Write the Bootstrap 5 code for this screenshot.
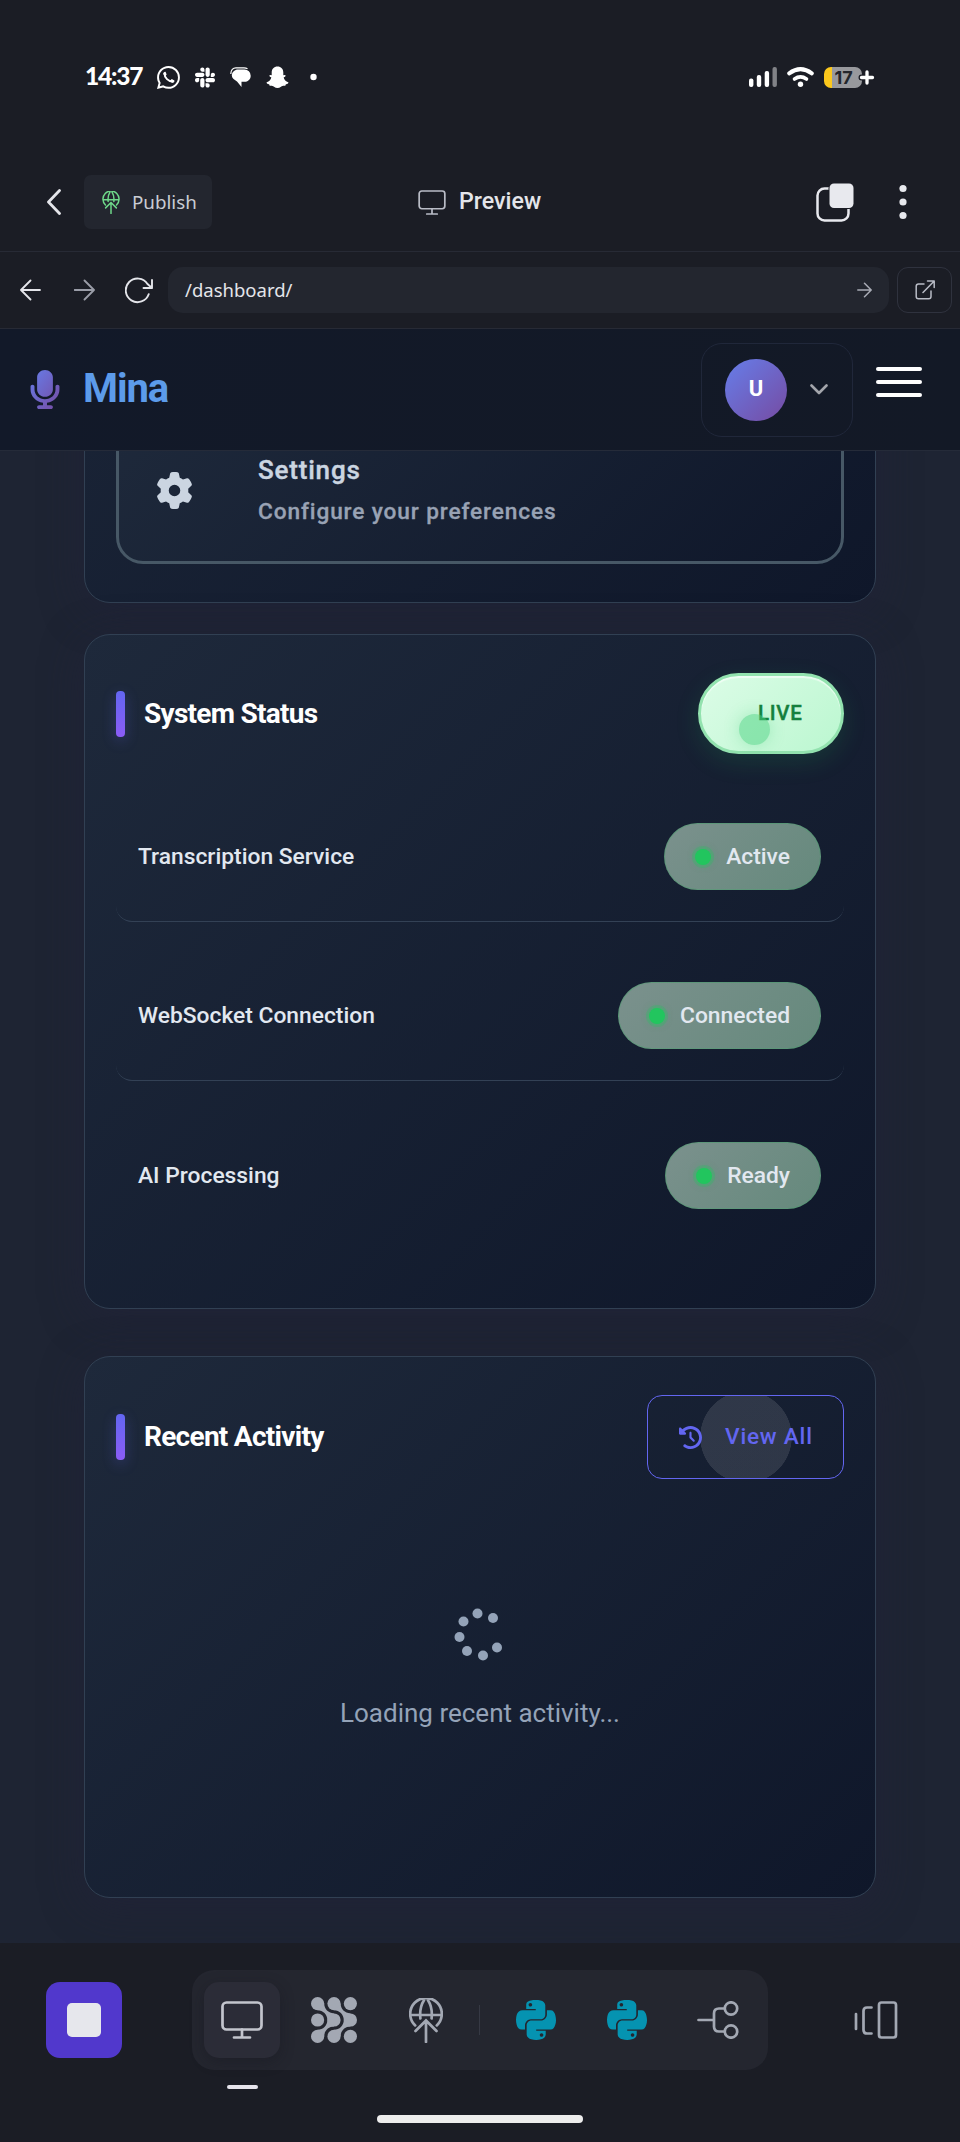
<!DOCTYPE html>
<html lang="en" data-bs-theme="dark">
<head>
<meta charset="utf-8">
<meta name="viewport" content="width=device-width, initial-scale=1">
<title>Mina dashboard</title>
<link href="https://cdn.jsdelivr.net/npm/bootstrap@5.3.0/dist/css/bootstrap.min.css" rel="stylesheet">
<style>
body{background:#1b1d25;font-family:Roboto,"Liberation Sans",sans-serif;color:#e2e8f0;line-height:1.2;overflow:hidden}
svg{display:block;flex:none}
.plex{font-family:"Noto Sans","Open Sans",sans-serif}
/* device status bar */
.status-bar{height:154px;padding:0 86px 0 85px}
.clock{font:900 24.5px/1 Lato,sans-serif;color:#fff;width:72px;letter-spacing:-1.2px;padding-bottom:2px}
.tray-icons{gap:15px}
.battery{width:38px;height:21px;border-radius:7px;background:linear-gradient(90deg,#fcc81c 8px,#98999d 8px);position:relative;margin-left:10px;margin-right:12px;color:#23252b;font:bold 18px/21px Inter,sans-serif;text-align:center;padding-left:1px}
.battery svg{position:absolute;left:34px;top:2px}
/* workspace header */
.app-head{height:98px;border-bottom:1px solid #272a35;padding-bottom:1px}
.publish{width:128px;height:54px;border-radius:7px;background:#23262f;color:#c9ccd4;font-size:18.8px;padding-left:18px;margin-left:23px}
.preview-title{font:500 23.2px/1 Roboto,sans-serif;color:#e4e5ea}
.url-row{height:77px;border-bottom:1px solid #272a35}
.url-field{width:721px;height:46px;border-radius:15px;background:#23262f;color:#e4e5ea;font-size:18.5px;padding:0 17px 0 17px;margin-left:15px}
.open-ext{width:55px;height:46px;border:1px solid #2f323e;border-radius:11px;margin-left:8px}
/* Mina navbar */
.mina-nav{height:122px;background:linear-gradient(90deg,#121929,#131926);border-bottom:1px solid #252b39;padding:0 38px 0 28px}
.brand{font-size:40px;font-weight:700;color:#5c9bea;letter-spacing:-1.1px;line-height:1;margin-left:21px;padding-bottom:2px}
.user-box{width:152px;height:94px;border:1px solid #20273a;border-radius:21px;padding-left:23px}
.avatar{width:62px;height:62px;border-radius:50%;background:linear-gradient(135deg,#667eea,#764ba2);color:#fff;font-size:22px;font-weight:700}
.burger{width:46px;gap:9px;margin-left:23px;margin-bottom:15px}
.burger i{height:4px;border-radius:2px;background:#fff}
/* dashboard */
.dash{height:1492px;background:#1e2433;padding:0 84px;overflow:hidden}
.panel{flex:none;border:1px solid #314053;border-radius:26px;background:linear-gradient(135deg,#1e293b 0%,#0f172a 100%);box-shadow:0 8px 40px rgba(34,34,58,.55);padding:38px 31px}
.panel-actions{height:652px;margin-top:-500px;margin-bottom:31px}
.panel-status{height:675px;margin-bottom:47px}
.panel-activity{height:542px}
.setting{height:150px;border:3px solid #475866;border-radius:27px;background:linear-gradient(135deg,#1e293b,#0f172a);padding-left:38px;padding-top:2px}
.setting-text{margin-left:66px}
.setting-name{font-size:26px;font-weight:500;color:#cbd5e1;letter-spacing:.8px;-webkit-text-stroke:.4px #cbd5e1}
.setting-note{font-size:22.7px;font-weight:500;color:#98a2b4;letter-spacing:.86px;margin-top:12px;-webkit-text-stroke:.3px #98a2b4}
.accent{width:9px;height:46px;border-radius:4px;background:linear-gradient(#6366f1,#8b5cf6);box-shadow:0 4px 14px rgba(99,102,241,.3);margin-right:19px}
.panel-title{font-size:28px;font-weight:700;color:#fff;letter-spacing:-.72px}
.live{width:146px;height:81px;border:3px solid #92e2ae;border-radius:41px;background:linear-gradient(135deg,#dcfce7,#bbf7d0);box-shadow:0 8px 24px rgba(34,197,94,.15),inset 0 2px 1px rgba(255,255,255,.6);color:#15803d;font-size:20.5px;font-weight:500;letter-spacing:.7px;-webkit-text-stroke:.4px #15803d;padding-left:57px;position:relative}
.live::before{content:"";position:absolute;left:38px;top:38px;width:31px;height:31px;border-radius:50%;background:rgba(74,210,128,.5);box-shadow:0 0 16px rgba(34,197,94,.25)}
.service{height:130px;border-bottom:1px solid #334155;border-radius:16px;padding:0 23px 0 22px;margin-bottom:29px;font-size:22.8px;font-weight:500}
.service:nth-child(3){margin-bottom:30px}
.service:last-child{border-bottom-color:transparent}
.state{height:67px;border-radius:34px;border:1px solid rgba(74,160,110,.5);background:linear-gradient(135deg,#7b918d,#65897c);padding:0 30px;color:#e2e8f0}
.state i{width:16px;height:16px;border-radius:50%;background:#22c55e;box-shadow:0 0 0 3px rgba(34,197,94,.25),0 0 7px rgba(34,197,94,.5);margin-right:15px}
.view-all{width:197px;height:84px;border:1px solid #6366f1;border-radius:15px;color:#6366f1;font-size:22.6px;font-weight:500;letter-spacing:.8px;padding-left:31px;background:radial-gradient(circle at 98px 41px,rgba(255,255,255,.11) 0 45.5px,transparent 46px)}
.loading{color:#94a3b8;font-size:26px;margin-top:127px}
/* dock */
.dock{height:199px;background:#1b1d25;position:relative}
.stop{width:76px;height:76px;border-radius:14px;background:#5138cc;margin:39px 0 0 46px}
.stop i{width:34px;height:34px;border-radius:5px;background:#e6e7ec}
.tool-group{width:576px;height:100px;border-radius:22px;background:#24262f;margin:27px 0 0 70px;padding:0 12px}
.tool{width:76px;height:76px;border-radius:15px}
.tool.current{background:#2b2c37;box-shadow:0 4px 14px rgba(20,20,30,.35)}
.tool-divider{width:1px;height:30px;background:#363944;margin-left:15px}
.tool-mark{width:31px;height:4px;border-radius:2px;background:#e6e4ec;position:absolute;left:227px;top:142px}
.home-bar{width:206px;height:8px;border-radius:4px;background:#ededed;position:absolute;left:377px;top:172px}
</style>
</head>
<body>
<svg width="0" height="0" class="position-absolute"><defs>
<symbol id="py" viewBox="0 32 448 448"><path d="M439.8 200.5c-7.7-30.9-22.3-54.2-53.4-54.2h-40.1v47.4c0 36.8-31.2 67.8-66.8 67.8H172.7c-29.2 0-53.4 25-53.4 54.3v101.8c0 29 25.2 46 53.4 54.3 33.8 9.9 66.3 11.7 106.8 0 26.9-7.8 53.4-23.5 53.4-54.3v-40.7H226.2v-13.6h160.2c31.1 0 42.6-21.7 53.4-54.2 11.2-33.5 10.7-65.7 0-108.6zM286.2 404c11.1 0 20.1 9.1 20.1 20.3 0 11.3-9 20.4-20.1 20.4-11 0-20.1-9.2-20.1-20.4.1-11.3 9.1-20.3 20.1-20.3zM167.8 248.1h106.8c29.7 0 53.4-24.5 53.4-54.3V91.9c0-29-24.4-50.7-53.4-55.6-35.8-5.9-74.7-5.6-106.8.1-45.2 8-53.4 24.7-53.4 55.6v40.7h106.9v13.6h-147c-31.1 0-58.3 18.7-66.8 54.2-9.8 40.7-10.2 66.1 0 108.6 7.6 31.6 25.7 54.2 56.8 54.2H101v-48.8c0-35.3 30.5-66.4 66.8-66.4zm-6.7-142.6c-11.1 0-20.1-9.1-20.1-20.3.1-11.3 9-20.4 20.1-20.4 11 0 20.1 9.2 20.1 20.4s-9 20.3-20.1 20.3z"/></symbol>
<symbol id="monitor" viewBox="0 0 42 38"><rect x="1.5" y="1.5" width="39" height="27" rx="4"/><path d="M21 28.5V36M13 36.5h16"/></symbol>
<symbol id="globe" viewBox="0 0 34 45"><path d="M6.2 27.4A15.8 15.8 0 1 1 27.8 27.4M1.5 17h31M11.4 20.5C10.5 12 12.5 6 15 2.2M22.6 20.5C23.5 12 21.5 6 19 2.2M17 23.5V44M6.5 33L17 22.5L27.5 33"/></symbol>
</defs></svg>

<header class="status-bar d-flex align-items-center">
  <div class="clock">14:37</div>
  <div class="tray-icons d-flex align-items-center">
    <svg width="23" height="23" viewBox="0 0 16 16" fill="#fff"><path d="M13.601 2.326A7.854 7.854 0 0 0 7.994 0C3.627 0 .068 3.558.064 7.926c0 1.399.366 2.76 1.057 3.965L0 16l4.204-1.102a7.933 7.933 0 0 0 3.79.965h.004c4.368 0 7.926-3.558 7.93-7.93A7.898 7.898 0 0 0 13.6 2.326zM7.994 14.521a6.573 6.573 0 0 1-3.356-.92l-.24-.144-2.494.654.666-2.433-.156-.251a6.56 6.56 0 0 1-1.007-3.505c0-3.626 2.957-6.584 6.591-6.584a6.56 6.56 0 0 1 4.66 1.931 6.557 6.557 0 0 1 1.928 4.66c-.004 3.639-2.961 6.592-6.592 6.592z"/><path d="M5.2 5.2C5.1 8 8 11 11 10.8" fill="none" stroke="#fff" stroke-width="1.3" stroke-linecap="round"/><path d="M4.4 5.8C4.2 4.4 5.5 3.8 6 4.2L6.7 5.9L5.7 7.3zM10.1 11.5C11.5 12 12.4 10.8 12.1 10L10.3 9.1L9 10.3z"/></svg>
    <svg width="20" height="21" viewBox="0 0 16 16" fill="#fff"><path d="M3.362 10.11c0 .926-.756 1.681-1.681 1.681S0 11.036 0 10.111C0 9.186.756 8.43 1.68 8.43h1.682v1.68zm.846 0c0-.924.756-1.68 1.681-1.68s1.681.756 1.681 1.68v4.21c0 .924-.756 1.68-1.68 1.68a1.685 1.685 0 0 1-1.682-1.68v-4.21zM5.89 3.362c-.926 0-1.682-.756-1.682-1.681S4.964 0 5.89 0s1.68.756 1.68 1.68v1.682H5.89zm0 .846c.924 0 1.68.756 1.68 1.681S6.814 7.57 5.89 7.57H1.68C.757 7.57 0 6.814 0 5.89c0-.926.756-1.682 1.68-1.682h4.21zm6.749 1.682c0-.926.755-1.682 1.68-1.682.925 0 1.681.756 1.681 1.681s-.756 1.681-1.68 1.681h-1.681V5.89zm-.848 0c0 .924-.755 1.68-1.68 1.68A1.685 1.685 0 0 1 8.43 5.89V1.68C8.43.757 9.186 0 10.11 0c.926 0 1.681.756 1.681 1.68v4.21zm-1.681 6.748c.926 0 1.682.756 1.682 1.681S11.036 16 10.11 16s-1.681-.756-1.681-1.68v-1.682h1.68zm0-.847c-.924 0-1.68-.755-1.68-1.68 0-.925.756-1.681 1.68-1.681h4.21c.924 0 1.68.756 1.68 1.68 0 .926-.756 1.681-1.68 1.681h-4.21z"/></svg>
    <svg width="21" height="20" viewBox="0 0 21 20"><path d="M.8 7C.8 3 3 .8 6 .8h8q2 0 3.500 1" fill="none" stroke="#fff" stroke-width="1.200"/><path d="M8 2.500h6.500a6.200 6.200 0 0 1 6.200 6.200c0 4-3.500 6-5.700 6h-3.500V20L7 14.500C4 12.500 1.800 11 1.800 8.500C1.800 5 5 2.500 8 2.500z" fill="#fff"/></svg>
    <svg width="23" height="23" viewBox="0 0 23 23" fill="#fff"><path d="M11.5.5C15 .5 17.3 3 17.3 6.5V9.2Q18.5 9 19.3 9.2C20.5 9.8 19 10.8 17.7 11.3C18 14 20 15.7 22.2 16.3C23 16.8 22 18 19.9 18.3L19.3 19.8C17.5 19.6 16.4 19.7 15 20.8C12.8 22.5 10.2 22.5 8 20.8C6.6 19.7 5.5 19.6 3.7 19.8L3.1 18.3C1 18 0 16.8.8 16.3C3 15.7 5 14 5.3 11.3C4 10.8 2.5 9.8 3.7 9.2Q4.500 9 5.700 9.200V6.500C5.700 3 8 .5 11.500.5z"/></svg>
    <svg width="8" height="8" viewBox="0 0 8 8" style="margin-left:6px"><circle cx="3.5" cy="4" r="3.2" fill="#fff"/></svg>
  </div>
  <div class="d-flex align-items-center ms-auto">
    <svg width="28" height="20" viewBox="0 0 28 20" fill="#fff"><rect y="11.5" width="4.4" height="8.5" rx="2"/><rect x="7.8" y="8" width="4.4" height="12" rx="2"/><rect x="15.7" y="4" width="4.4" height="16" rx="2"/><rect x="23.5" y="0" width="4.4" height="20" rx="2" fill="#818287"/></svg>
    <svg width="27" height="20" viewBox="0 0 27 20" style="margin-left:10px" fill="none" stroke="#fff" stroke-width="4" stroke-linecap="round"><path d="M2.2 6.3Q13.5-2 24.8 6.3"/><path d="M7.5 12Q13.5 7.8 19.5 12" stroke-width="3.6"/><circle cx="13.5" cy="17.3" r="2.7" fill="#fff" stroke="none"/></svg>
    <div class="battery">17<svg width="18" height="17" viewBox="0 0 18 17" fill="none" stroke-linecap="round"><path d="M3.5 8.5h11M9 3v11" stroke="#1b1d25" stroke-width="6"/><path d="M3.5 8.5h11M9 3v11" stroke="#fff" stroke-width="3.300"/></svg></div>
  </div>
</header>

<div class="app-head d-flex align-items-center plex">
  <svg width="14" height="26" viewBox="0 0 14 26" style="margin-left:47px" fill="none" stroke="#e4e5ea" stroke-width="2.8" stroke-linecap="round" stroke-linejoin="round"><path d="M12.5 1.500L1.500 13L12.500 24.500"/></svg>
  <div class="publish d-flex align-items-center"><svg width="18" height="23" style="margin-right:12px" fill="none" stroke="#6fd98a" stroke-width="2.9" stroke-linecap="round"><use href="#globe"/></svg>Publish</div>
  <svg width="28" height="25" style="margin-left:206px" fill="none" stroke="#b9bcc6" stroke-width="2.6" stroke-linecap="round"><use href="#monitor"/></svg>
  <div class="preview-title" style="margin-left:13px">Preview</div>
  <svg width="38" height="39" viewBox="0 0 38 39" class="ms-auto"><rect x="1.5" y="5.5" width="31" height="32" rx="7" fill="none" stroke="#e8e9ee" stroke-width="2.5"/><rect x="12.500" y="0" width="26" height="26" rx="5.500" fill="#1b1d25"/><rect x="13.500" y=".5" width="24" height="24.500" rx="4.500" fill="#e8e9ee"/></svg>
  <svg width="8" height="36" viewBox="0 0 8 36" fill="#e8e9ee" style="margin:0 53px 0 45px"><circle cx="4" cy="4.5" r="3.6"/><circle cx="4" cy="18" r="3.6"/><circle cx="4" cy="31.500" r="3.6"/></svg>
</div>

<div class="url-row d-flex align-items-center plex">
  <svg width="21" height="22" viewBox="0 0 21 22" style="margin-left:20px" fill="none" stroke="#e4e5ea" stroke-width="1.8" stroke-linecap="round" stroke-linejoin="round"><path d="M20 11H1.5M10.5 1.500L1 11L10.500 20.500"/></svg>
  <svg width="21" height="22" viewBox="0 0 21 22" style="margin-left:33px" fill="none" stroke="#9a9da8" stroke-width="1.8" stroke-linecap="round" stroke-linejoin="round"><path d="M.5 11H19.500M10.500 1.500L20 11L10.500 20.500"/></svg>
  <svg width="28" height="27" viewBox="0 0 28 27" style="margin-left:30px" fill="none" stroke="#e4e5ea" stroke-width="1.9" stroke-linecap="round" stroke-linejoin="round"><path d="M23.7 17.2A11.800 11.800 0 1 1 22.500 7L27 11M27 3V11H18.500"/></svg>
  <div class="url-field d-flex align-items-center justify-content-between">/dashboard/<svg width="15" height="16" viewBox="0 0 15 16" fill="none" stroke="#a9acb6" stroke-width="1.5" stroke-linecap="round" stroke-linejoin="round"><path d="M.8 8H14M7.500 1.200L14.200 8L7.500 14.800"/></svg></div>
  <div class="open-ext d-flex align-items-center justify-content-center"><svg width="20" height="20" viewBox="0 0 20 20" fill="none" stroke="#b9bcc6" stroke-width="1.5" stroke-linecap="round" stroke-linejoin="round"><path d="M9 4H3.500Q1.200 4 1.200 6.300V16.500Q1.200 18.800 3.500 18.800H13.700Q16 18.800 16 16.500V11M8 12.500L19 1.200M12.500 1H19.200V7.500"/></svg></div>
</div>

<nav class="mina-nav d-flex align-items-center">
  <svg width="34" height="39" viewBox="-15 0 414 512" preserveAspectRatio="none"><defs><linearGradient id="mg" x1="0" y1="0" x2="1" y2="1"><stop stop-color="#667eea"/><stop offset="1" stop-color="#764ba2"/></linearGradient></defs><path fill="url(#mg)" d="M192 0C139 0 96 43 96 96V256c0 53 43 96 96 96s96-43 96-96V96c0-53-43-96-96-96zM64 216c0-13.300-10.700-24-24-24s-24 10.700-24 24v40c0 89.100 66.200 162.700 152 174.400V464H120c-13.300 0-24 10.700-24 24s10.700 24 24 24h144c13.300 0 24-10.700 24-24s-10.700-24-24-24H216V430.400c85.800-11.700 152-85.300 152-174.400V216c0-13.300-10.700-24-24-24s-24 10.700-24 24v40c0 70.700-57.300 128-128 128s-128-57.300-128-128V216z"/></svg>
  <div class="brand">Mina</div>
  <div class="user-box d-flex align-items-center ms-auto">
    <div class="avatar d-flex align-items-center justify-content-center">U</div>
    <svg width="18" height="11" viewBox="0 0 18 11" style="margin-left:23px" fill="none" stroke="#a3a5ab" stroke-width="2.6" stroke-linecap="round" stroke-linejoin="round"><path d="M1.5 1.500L9 9L16.500 1.500"/></svg>
  </div>
  <div class="burger d-flex flex-column"><i></i><i></i><i></i></div>
</nav>

<main class="dash d-flex flex-column">
  <section class="panel panel-actions d-flex flex-column justify-content-end">
    <div class="setting d-flex align-items-center">
      <svg width="35" height="37" viewBox="13 0 486 512" fill="#cbd5e1" preserveAspectRatio="none"><path fill-rule="evenodd" d="M495.900 166.600c3.200 8.700 .5 18.400-6.400 24.600l-43.300 39.400c1.100 8.300 1.700 16.800 1.700 25.400s-.6 17.100-1.700 25.400l43.300 39.400c6.900 6.200 9.600 15.900 6.400 24.600c-4.400 11.900-9.700 23.300-15.800 34.300l-4.700 8.100c-6.600 11-14 21.400-22.100 31.200c-5.900 7.200-15.700 9.600-24.500 6.800l-55.700-17.700c-13.400 10.300-28.200 18.900-44 25.400l-12.500 57.100c-2 9.100-9 16.300-18.200 17.800c-13.800 2.300-28 3.500-42.500 3.500s-28.700-1.200-42.500-3.500c-9.200-1.500-16.200-8.700-18.200-17.800l-12.500-57.100c-15.800-6.500-30.600-15.100-44-25.400L83.100 425.900c-8.800 2.800-18.600 .3-24.500-6.800c-8.100-9.800-15.500-20.200-22.100-31.200l-4.700-8.100c-6.100-11-11.400-22.400-15.800-34.300c-3.200-8.700-.5-18.400 6.400-24.600l43.300-39.400C64.600 273.100 64 264.600 64 256s.6-17.100 1.700-25.400L22.400 191.200c-6.900-6.200-9.600-15.900-6.400-24.600c4.400-11.900 9.700-23.300 15.800-34.300l4.700-8.100c6.600-11 14-21.400 22.100-31.200c5.900-7.200 15.700-9.600 24.500-6.800l55.700 17.700c13.400-10.300 28.200-18.900 44-25.400l12.500-57.100c2-9.100 9-16.300 18.200-17.800C227.300 1.200 241.500 0 256 0s28.700 1.200 42.500 3.500c9.200 1.500 16.200 8.700 18.200 17.800l12.500 57.100c15.800 6.500 30.600 15.100 44 25.400l55.700-17.700c8.800-2.800 18.600-.3 24.500 6.800c8.100 9.800 15.500 20.200 22.100 31.200l4.700 8.100c6.100 11 11.400 22.400 15.800 34.300zM256 336a80 80 0 1 0 0-160 80 80 0 1 0 0 160z"/></svg>
      <div class="setting-text"><div class="setting-name">Settings</div><div class="setting-note">Configure your preferences</div></div>
    </div>
  </section>

  <section class="panel panel-status">
    <div class="d-flex align-items-center" style="margin-bottom:38px">
      <span class="accent"></span><span class="panel-title">System Status</span>
      <span class="live d-flex align-items-center ms-auto">LIVE</span>
    </div>
    <div class="service d-flex align-items-center justify-content-between">Transcription Service<span class="state d-flex align-items-center"><i></i>Active</span></div>
    <div class="service d-flex align-items-center justify-content-between">WebSocket Connection<span class="state d-flex align-items-center"><i></i>Connected</span></div>
    <div class="service d-flex align-items-center justify-content-between">AI Processing<span class="state d-flex align-items-center"><i></i>Ready</span></div>
  </section>

  <section class="panel panel-activity">
    <div class="d-flex align-items-center">
      <span class="accent"></span><span class="panel-title">Recent Activity</span>
      <span class="view-all d-flex align-items-center ms-auto"><svg width="23" height="23" viewBox="0 0 512 512" fill="#6366f1" style="margin-right:23px"><path d="M75 75L41 41C25.900 25.900 0 36.600 0 57.900V168c0 13.300 10.700 24 24 24H134.100c21.400 0 32.100-25.900 17-41l-30.800-30.800C155 85.500 203 64 256 64c106 0 192 86 192 192s-86 192-192 192c-40.800 0-78.600-12.700-109.700-34.400c-14.500-10.100-34.400-6.600-44.600 7.900s-6.600 34.400 7.900 44.600C151.200 495 201.700 512 256 512c141.400 0 256-114.600 256-256S397.400 0 256 0C185.300 0 121.300 28.700 75 75zm181 53c-13.300 0-24 10.700-24 24V256c0 6.400 2.500 12.500 7 17l72 72c9.400 9.400 24.600 9.400 33.900 0s9.400-24.600 0-33.900l-65-65V152c0-13.300-10.700-24-24-24z"/></svg>View All</span>
    </div>
    <div class="loading d-flex flex-column align-items-center">
      <svg width="52" height="56" viewBox="454 1606 52 56" fill="#94a3b8"><circle cx="477.5" cy="1613.5" r="5"/><circle cx="493" cy="1618" r="5"/><circle cx="463.5" cy="1621.5" r="5"/><circle cx="459.5" cy="1637" r="5"/><circle cx="467" cy="1651" r="5"/><circle cx="483" cy="1655.5" r="5"/><circle cx="497" cy="1647.5" r="5"/></svg>
      <div style="margin-top:36px">Loading recent activity...</div>
    </div>
  </section>
</main>

<footer class="dock d-flex align-items-start">
  <div class="stop d-flex align-items-center justify-content-center"><i></i></div>
  <div class="tool-group d-flex align-items-center">
    <div class="tool current d-flex align-items-center justify-content-center"><svg width="42" height="38" fill="none" stroke="#c3c5cd" stroke-width="2.7" stroke-linecap="round"><use href="#monitor"/></svg></div>
    <div class="tool d-flex align-items-center justify-content-center" style="margin-left:16px"><svg width="46" height="46" viewBox="0 0 46 46" fill="#a3a8b3"><circle cx="6.6" cy="6.6" r="6.6"/><circle cx="23" cy="6.6" r="6.6"/><circle cx="39.4" cy="6.6" r="6.6"/><circle cx="6.6" cy="23" r="6.6"/><circle cx="23" cy="23" r="6.6"/><circle cx="39.4" cy="23" r="6.6"/><circle cx="6.6" cy="39.4" r="6.6"/><circle cx="23" cy="39.4" r="6.6"/><circle cx="39.4" cy="39.4" r="6.6"/><path id="neck" d="M13.2 6.600C13.200 12 17.500 16.400 23 16.400V29.600C17.500 29.600 13.200 34 13.200 39.400L6.600 32.800C12 32.800 16.400 28.500 16.400 23S12 13.200 6.600 13.200z"/><use href="#neck" x="16.4"/></svg></div>
    <div class="tool d-flex align-items-center justify-content-center" style="margin-left:16px"><svg width="34" height="45" fill="none" stroke="#a3a8b3" stroke-width="2.7" stroke-linecap="round"><use href="#globe"/></svg></div>
    <div class="tool-divider"></div>
    <div class="tool d-flex align-items-center justify-content-center" style="margin-left:18px"><svg width="40" height="40" fill="#0593b1"><use href="#py"/></svg></div>
    <div class="tool d-flex align-items-center justify-content-center" style="margin-left:15px"><svg width="40" height="40" fill="#0593b1"><use href="#py"/></svg></div>
    <div class="tool d-flex align-items-center justify-content-center" style="margin-left:15px"><svg width="42" height="38" viewBox="0 0 42 38" fill="none" stroke="#a3a8b3" stroke-width="2.7" stroke-linecap="round"><path d="M1.5 19H16.500M27.500 7.500H22Q17 7.500 17 12.500V25.500Q17 30.500 22 30.500H27.500"/><circle cx="34" cy="7.5" r="6.2"/><circle cx="34" cy="30.5" r="6.2"/></svg></div>
  </div>
  <svg width="44" height="38" viewBox="0 0 44 38" style="margin:58px 0 0 86px" fill="none" stroke="#a3a8b3" stroke-width="2.7" stroke-linecap="round"><path d="M2 13V28M17.500 6.500H13Q9.500 6.500 9.500 10V29Q9.500 32.500 13 32.500H17.500"/><rect x="25" y="1.5" width="17" height="35" rx="2.5"/></svg>
  <div class="tool-mark"></div>
  <div class="home-bar"></div>
</footer>
<script src="https://cdn.jsdelivr.net/npm/bootstrap@5.3.0/dist/js/bootstrap.bundle.min.js"></script>
</body>
</html>
